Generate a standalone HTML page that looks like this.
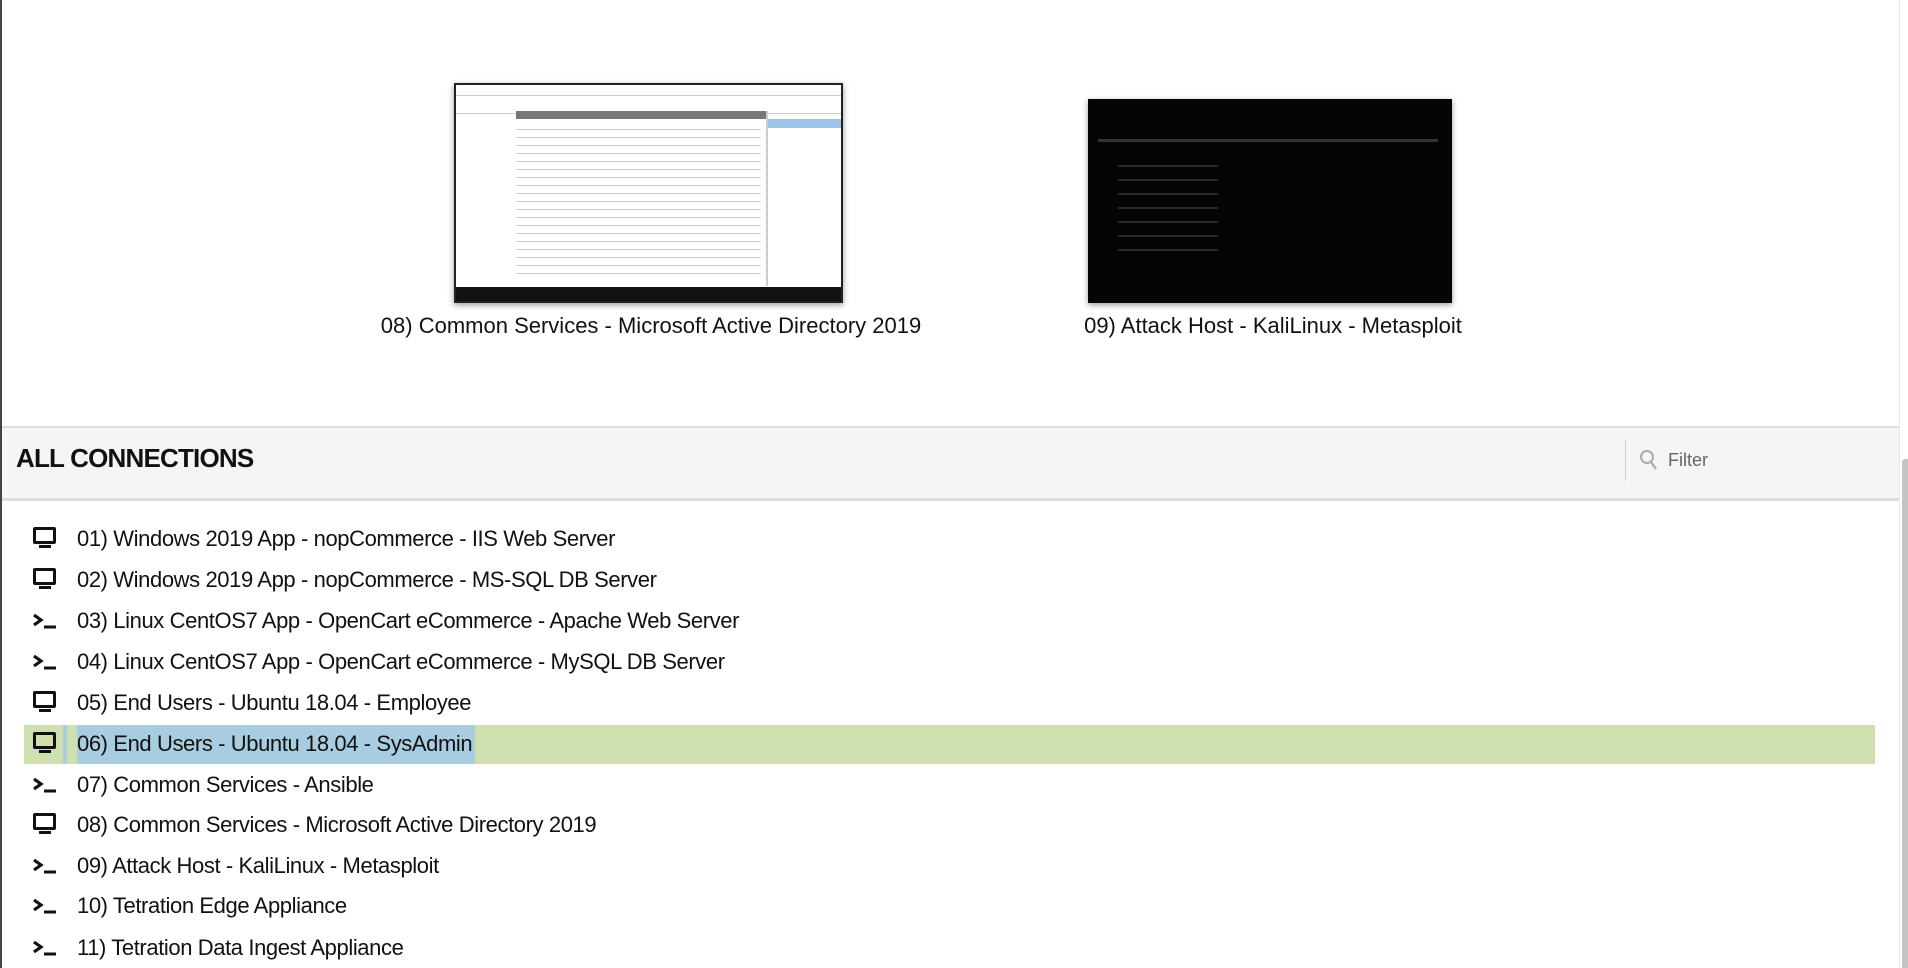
<!DOCTYPE html>
<html><head><meta charset="utf-8"><style>
body{margin:0;width:1908px;height:968px;background:#fff;position:relative;overflow:hidden;font-family:"Liberation Sans",sans-serif;color:#111}
.abs{position:absolute}
.cap{position:absolute;top:313px;font-size:22px;white-space:nowrap;transform:translateX(-50%)}
.row{position:absolute;left:0;height:40px;width:1900px}
.row .t{position:absolute;left:77px;top:8px;font-size:22px;white-space:nowrap;letter-spacing:-0.4px}
.mon{position:absolute;left:33px;top:9px;width:17px;height:11px;border:3px solid #111;border-radius:2px}
.mon:after{content:"";position:absolute;left:3px;top:15px;width:12px;height:3px;background:#111}
.term{position:absolute;left:32px;top:12px}
</style></head><body>
<div class="abs" style="left:0;top:0;width:2px;height:968px;background:#444"></div>

<div class="abs" style="left:454px;top:83px;width:389px;height:220px;background:#fff;border:2px solid #222;box-sizing:border-box;box-shadow:0 2px 6px rgba(0,0,0,.4);overflow:hidden">
 <div class="abs" style="left:0;top:0;width:100%;height:10px;border-bottom:1px solid #ccc"></div>
 <div class="abs" style="left:0;top:12px;width:100%;height:16px;border-bottom:1px solid #ccc"></div>
 <div class="abs" style="left:60px;top:26px;width:250px;height:8px;background:#777"></div>
 <div class="abs" style="left:310px;top:26px;width:2px;height:175px;background:#ccc"></div>
 <div class="abs" style="left:312px;top:34px;width:75px;height:9px;background:#9cc4e8"></div>
 <div class="abs" style="left:60px;top:40px;width:245px;height:150px;background:repeating-linear-gradient(#fff 0 4px,#ccc 4px 5px,#fff 5px 8px)"></div>
 <div class="abs" style="left:0;bottom:0;width:100%;height:14px;background:#111"></div>
</div>
<div class="abs" style="left:1088px;top:99px;width:364px;height:204px;background:#050505;box-shadow:0 2px 6px rgba(0,0,0,.4)">
 <div class="abs" style="left:10px;top:40px;width:340px;height:3px;background:#333"></div>
 <div class="abs" style="left:30px;top:60px;width:100px;height:100px;background:repeating-linear-gradient(#050505 0 6px,#2a2a2a 6px 8px,#050505 8px 14px)"></div>
</div>
<div class="cap" style="left:651px">08) Common Services - Microsoft Active Directory 2019</div>
<div class="cap" style="left:1273px">09) Attack Host - KaliLinux - Metasploit</div>

<div class="abs" style="left:2px;top:426px;width:1897px;height:70px;background:#f5f5f5;border-top:2px solid #ddd;border-bottom:3px solid #ddd"></div>
<div class="abs" style="left:16px;top:443px;font-size:26px;font-weight:bold;letter-spacing:-0.8px">ALL CONNECTIONS</div>
<div class="abs" style="left:1625px;top:440px;width:1px;height:41px;background:#ccc"></div>
<svg class="abs" style="left:1639px;top:449px" width="20" height="22" viewBox="0 0 20 22"><circle cx="8" cy="8" r="6" fill="none" stroke="#aaa" stroke-width="2"/><path d="M12 13l5 7" stroke="#aaa" stroke-width="2.2"/></svg>
<div class="abs" style="left:1668px;top:450px;font-size:18px;color:#666">Filter</div>
<div class="abs" style="left:1899px;top:0;width:1px;height:968px;background:#e5e5e5"></div>
<div class="abs" style="left:1902px;top:459px;width:6px;height:509px;background:#c4c4c4;border-radius:3px 0 0 0"></div>

<div class="abs" style="left:24px;top:725px;width:1851px;height:39px;background:#d0dfae"></div>
<div class="abs" style="left:63px;top:725px;width:4px;height:39px;background:#a9cde0"></div>
<div class="abs" style="left:77px;top:725px;width:398px;height:39px;background:#a9cde0"></div>

<div class="row" style="top:518px"><div class="mon"></div><div class="t">01) Windows 2019 App - nopCommerce - IIS Web Server</div></div>
<div class="row" style="top:559px"><div class="mon"></div><div class="t">02) Windows 2019 App - nopCommerce - MS-SQL DB Server</div></div>
<div class="row" style="top:600px"><svg class="term" width="26" height="18" viewBox="0 0 26 18"><path d="M2 3l7 5-7 5" fill="none" stroke="#111" stroke-width="3.2"/><path d="M12 15h12" stroke="#111" stroke-width="3"/></svg><div class="t">03) Linux CentOS7 App - OpenCart eCommerce - Apache Web Server</div></div>
<div class="row" style="top:641px"><svg class="term" width="26" height="18" viewBox="0 0 26 18"><path d="M2 3l7 5-7 5" fill="none" stroke="#111" stroke-width="3.2"/><path d="M12 15h12" stroke="#111" stroke-width="3"/></svg><div class="t">04) Linux CentOS7 App - OpenCart eCommerce - MySQL DB Server</div></div>
<div class="row" style="top:682px"><div class="mon"></div><div class="t">05) End Users - Ubuntu 18.04 - Employee</div></div>
<div class="row" style="top:723px"><div class="mon"></div><div class="t">06) End Users - Ubuntu 18.04 - SysAdmin</div></div>
<div class="row" style="top:764px"><svg class="term" width="26" height="18" viewBox="0 0 26 18"><path d="M2 3l7 5-7 5" fill="none" stroke="#111" stroke-width="3.2"/><path d="M12 15h12" stroke="#111" stroke-width="3"/></svg><div class="t">07) Common Services - Ansible</div></div>
<div class="row" style="top:804px"><div class="mon"></div><div class="t">08) Common Services - Microsoft Active Directory 2019</div></div>
<div class="row" style="top:845px"><svg class="term" width="26" height="18" viewBox="0 0 26 18"><path d="M2 3l7 5-7 5" fill="none" stroke="#111" stroke-width="3.2"/><path d="M12 15h12" stroke="#111" stroke-width="3"/></svg><div class="t">09) Attack Host - KaliLinux - Metasploit</div></div>
<div class="row" style="top:885px"><svg class="term" width="26" height="18" viewBox="0 0 26 18"><path d="M2 3l7 5-7 5" fill="none" stroke="#111" stroke-width="3.2"/><path d="M12 15h12" stroke="#111" stroke-width="3"/></svg><div class="t">10) Tetration Edge Appliance</div></div>
<div class="row" style="top:927px"><svg class="term" width="26" height="18" viewBox="0 0 26 18"><path d="M2 3l7 5-7 5" fill="none" stroke="#111" stroke-width="3.2"/><path d="M12 15h12" stroke="#111" stroke-width="3"/></svg><div class="t">11) Tetration Data Ingest Appliance</div></div>
</body></html>
